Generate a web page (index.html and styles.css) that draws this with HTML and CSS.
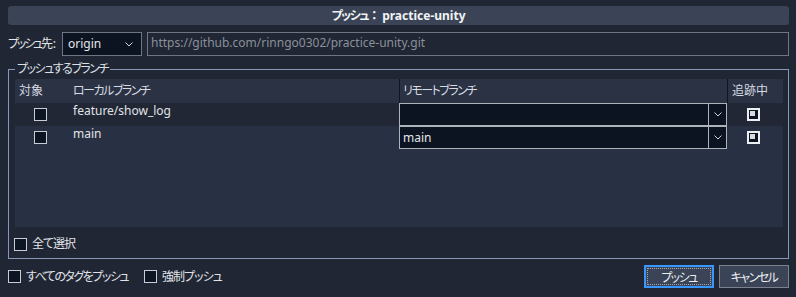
FILE: index.html
```html
<!DOCTYPE html>
<html lang="ja">
<head>
    <meta charset="UTF-8">
    <meta name="viewport" content="width=device-width, initial-scale=1.0">
    <title>プッシュ</title>
    <link rel="stylesheet" href="styles.css">
</head>
<body>
    <div class="title"><span class="kana">プッシュ</span><span class="colon">：</span>practice-unity</div>

    <div class="remote-row">
        <span class="remote-label"><span class="kana tight">プッシュ先</span>:</span>
        <div class="select remote-select">
            <span>origin</span>
            <svg class="chevron" width="8" height="5" viewBox="0 0 8 5"><polyline points="0.5,0.5 4,4 7.5,0.5" fill="none" stroke="#cfd3da" stroke-width="1"/></svg>
        </div>
        <div class="url">https://github.com/rinngo0302/practice-unity.git</div>
    </div>

    <fieldset class="branches">
        <legend class="kana">プッシュするブランチ</legend>
        <div class="branch-table">
            <div class="row head">
                <div class="cell">対象</div>
                <div class="cell kana">ローカルブランチ</div>
                <div class="cell sep kana">リモートブランチ</div>
                <div class="cell sep track-head">追跡中</div>
            </div>

            <div class="row odd">
                <div class="cell check-cell"><span class="check"></span></div>
                <div class="cell name">feature/show_log</div>
                <div class="combo">
                    <span class="combo-text"></span>
                    <span class="combo-btn"><svg width="8" height="5" viewBox="0 0 8 5"><polyline points="0.5,0.5 4,4 7.5,0.5" fill="none" stroke="#cfd3da" stroke-width="1"/></svg></span>
                </div>
                <div class="cell track-cell"><span class="check checked"></span></div>
            </div>

            <div class="row">
                <div class="cell check-cell"><span class="check"></span></div>
                <div class="cell name">main</div>
                <div class="combo">
                    <span class="combo-text">main</span>
                    <span class="combo-btn"><svg width="8" height="5" viewBox="0 0 8 5"><polyline points="0.5,0.5 4,4 7.5,0.5" fill="none" stroke="#cfd3da" stroke-width="1"/></svg></span>
                </div>
                <div class="cell track-cell"><span class="check checked"></span></div>
            </div>
        </div>

        <label class="option select-all"><span class="check"></span><span class="mixed">全て選択</span></label>
    </fieldset>

    <div class="footer">
        <label class="option"><span class="check"></span><span class="kana">すべてのタグをプッシュ</span></label>
        <label class="option"><span class="check"></span><span class="mixed">強制プッシュ</span></label>
        <div class="buttons">
            <button class="btn primary"><span class="focus kana">プッシュ</span></button>
            <button class="btn kana">キャンセル</button>
        </div>
    </div>
</body>
</html>
```

FILE: styles.css
```css
* {
    margin: 0;
    padding: 0;
    box-sizing: border-box;
}

body {
    background-color: #202633;
    color: #e4e6ea;
    font-family: "Noto Sans", "Noto Sans CJK JP", sans-serif;
    font-size: 12px;
    line-height: 16px;
    font-feature-settings: "palt";
    padding: 6px 7px 0 8px;
    height: 297px;
    overflow: hidden;
}

/* kana in the reference font are narrower than Noto's */
.kana {
    letter-spacing: -1.5px;
}

.kana.tight {
    letter-spacing: -2.2px;
    margin-right: 2px;
}

.mixed {
    letter-spacing: -1px;
}

.title {
    height: 19px;
    background-color: #3a4456;
    border-radius: 3px;
    text-align: center;
    font-weight: bold;
    color: #f2f3f5;
    line-height: 19px;
}

.title .colon {
    font-feature-settings: normal;
    margin-right: 2px;
}

.remote-row {
    display: flex;
    align-items: center;
    margin-top: 7px;
    height: 24px;
}

.remote-label {
    width: 54px;
    white-space: nowrap;
}

.select {
    display: flex;
    align-items: center;
    justify-content: space-between;
    background-color: #0d1421;
    border: 1px solid #6f7682;
    height: 24px;
}

.remote-select {
    width: 80px;
    padding: 0 8px 0 5px;
    margin-right: 5px;
}

.url {
    flex: 1;
    height: 24px;
    border: 1px solid #6f7682;
    color: #8b909a;
    padding: 0 3px;
    line-height: 20px;
}

.branches {
    margin-top: 5px;
    border: 1px solid #8797b6;
    padding: 0 5px 0 6px;
    height: 198px;
}

.branches legend {
    padding: 0 2px;
    color: #dde0e6;
}

.branch-table {
    margin-top: 2px;
    height: 148px;
    background-color: #283043;
}

.row {
    display: grid;
    grid-template-columns: 54px 330px 328px 56px;
    height: 23px;
}

.row.head {
    height: 24px;
    background-color: #2b3243;
    align-items: center;
    color: #d6dae2;
}

.row.odd {
    background-color: #212735;
}

.cell {
    padding-left: 4px;
}

.cell.sep {
    border-left: 1px solid #10151f;
    padding-left: 3px;
    height: 100%;
    display: flex;
    align-items: center;
}

.cell.track-head {
    padding-left: 4px;
}

.check-cell {
    padding-left: 19px;
    display: flex;
    align-items: center;
}

.track-cell {
    padding-left: 20px;
    display: flex;
    align-items: center;
}

.name {
    color: #e0e3e8;
}

.check {
    display: inline-block;
    width: 13px;
    height: 13px;
    border: 1px solid #c8ccd4;
    background-color: #0e1522;
    flex-shrink: 0;
}

.check.checked {
    border: 2px solid #eceef1;
    padding: 1px;
}

.check.checked::after {
    content: "";
    display: block;
    width: 5px;
    height: 5px;
    background-color: #d9dbe0;
}

.combo {
    display: flex;
    border: 1px solid #aeb2ba;
    background-color: #0d1421;
    height: 23px;
}

.combo-text {
    flex: 1;
    padding-left: 3px;
    line-height: 21px;
}

.combo-btn {
    width: 18px;
    border-left: 1px solid #aeb2ba;
    display: flex;
    align-items: center;
    justify-content: center;
}

.option {
    display: flex;
    align-items: center;
    gap: 5px;
    color: #e0e3e8;
}

.select-all {
    margin-top: 9px;
    margin-left: -1px;
}

.footer {
    display: flex;
    align-items: center;
    gap: 16px;
    margin-top: 6px;
    height: 23px;
}

.buttons {
    margin-left: auto;
    display: flex;
    gap: 5px;
}

.btn {
    width: 70px;
    height: 23px;
    background-color: #3a4456;
    border: 1px solid #7b818d;
    color: #eceef1;
    font-family: inherit;
    font-size: 12px;
    font-feature-settings: "palt";
}

.btn.primary {
    border: 2px solid #3797fd;
    padding: 1px;
}

.btn .focus {
    display: flex;
    align-items: center;
    justify-content: center;
    height: 100%;
    border: 1px dotted #a4a9b2;
}
```
